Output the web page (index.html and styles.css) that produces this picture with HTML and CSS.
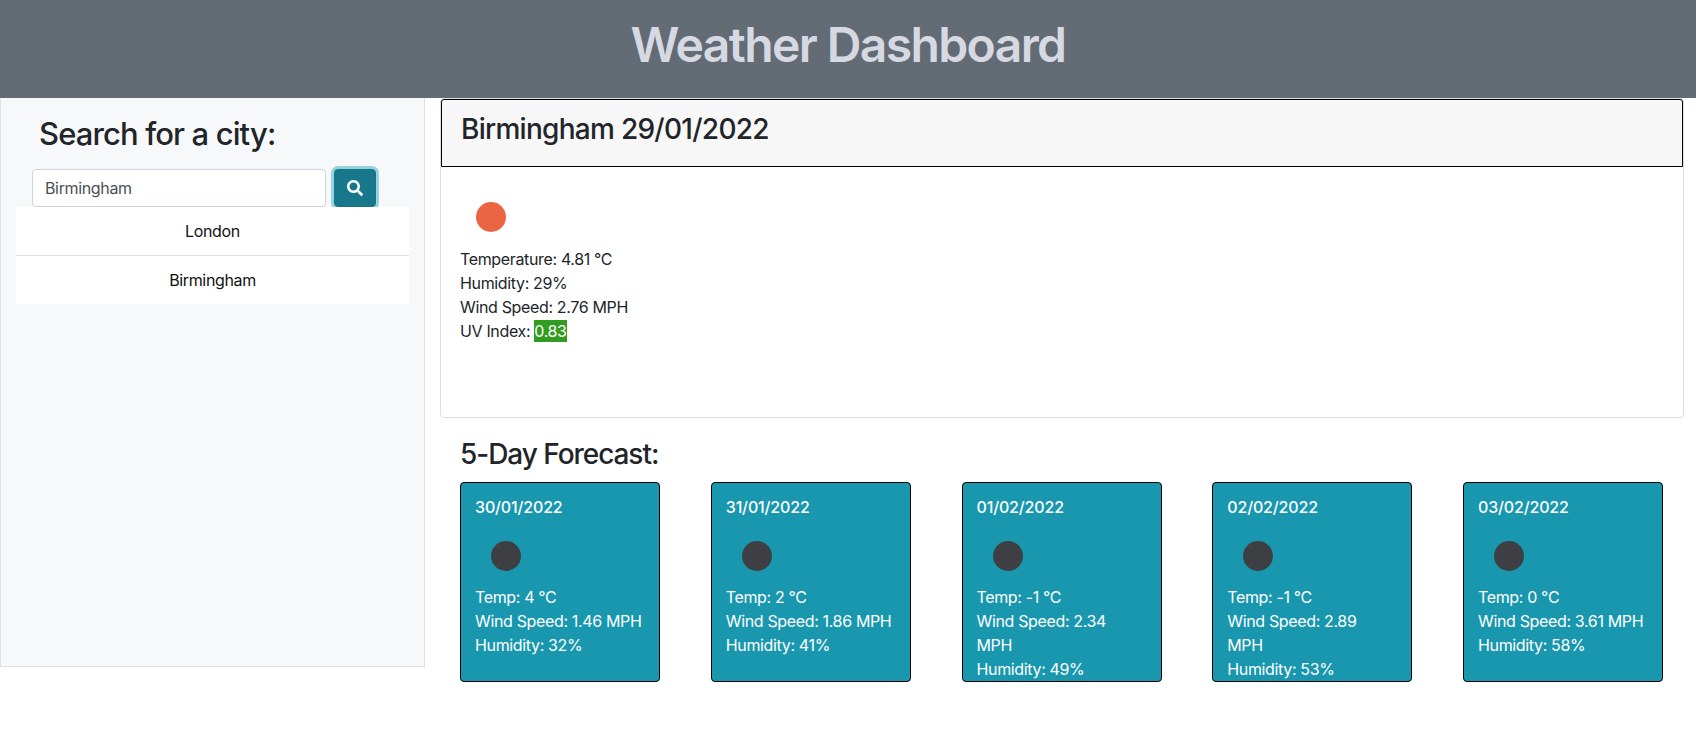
FILE: index.html
```html
<!DOCTYPE html>
<html lang="en">
<head>
<meta charset="utf-8">
<title>Weather Dashboard</title>
<link rel="stylesheet" href="styles.css">
</head>
<body>
<header class="topbar"><h1>Weather Dashboard</h1></header>
<div class="layout">
  <aside class="sidebar">
    <h3 class="search-title">Search for a city:</h3>
    <form class="search-form">
      <input class="search-input" type="text" value="Birmingham">
      <button class="search-btn" type="button" aria-label="Search">
        <svg viewBox="0 0 512 512" width="16" height="16"><path fill="#fff" d="M505 442.700L405.300 343c-4.500-4.500-10.600-7-17-7H372c27.600-35.300 44-79.700 44-128C416 93.100 322.900 0 208 0S0 93.100 0 208s93.100 208 208 208c48.300 0 92.700-16.400 128-44v16.300c0 6.400 2.500 12.500 7 17l99.700 99.700c9.400 9.400 24.600 9.400 33.900 0l28.300-28.300c9.400-9.400 9.400-24.600.1-34zM208 336c-70.700 0-128-57.200-128-128 0-70.700 57.200-128 128-128 70.700 0 128 57.200 128 128 0 70.700-57.200 128-128 128z"/></svg>
      </button>
    </form>
    <ul class="history">
      <li>London</li>
      <li>Birmingham</li>
    </ul>
  </aside>
  <main class="content">
    <section class="today">
      <h2 class="today-title">Birmingham 29/01/2022</h2>
      <div class="today-body">
        <div class="icon"><span class="dot dot-sun"></span></div>
        <p>Temperature: 4.81 °C</p>
        <p>Humidity: 29%</p>
        <p>Wind Speed: 2.76 MPH</p>
        <p>UV Index: <span class="uv">0.83</span></p>
      </div>
    </section>
    <section class="forecast">
      <h3 class="forecast-title">5-Day Forecast:</h3>
      <div class="forecast-row">
        <article class="day">
          <h6>30/01/2022</h6>
          <div class="icon"><span class="dot dot-night"></span></div>
          <p>Temp: 4 °C</p><p>Wind Speed: 1.46 MPH</p><p>Humidity: 32%</p>
        </article>
        <article class="day">
          <h6>31/01/2022</h6>
          <div class="icon"><span class="dot dot-night"></span></div>
          <p>Temp: 2 °C</p><p>Wind Speed: 1.86 MPH</p><p>Humidity: 41%</p>
        </article>
        <article class="day">
          <h6>01/02/2022</h6>
          <div class="icon"><span class="dot dot-night"></span></div>
          <p>Temp: -1 °C</p><p>Wind Speed: 2.34 MPH</p><p>Humidity: 49%</p>
        </article>
        <article class="day">
          <h6>02/02/2022</h6>
          <div class="icon"><span class="dot dot-night"></span></div>
          <p>Temp: -1 °C</p><p>Wind Speed: 2.89 MPH</p><p>Humidity: 53%</p>
        </article>
        <article class="day">
          <h6>03/02/2022</h6>
          <div class="icon"><span class="dot dot-night"></span></div>
          <p>Temp: 0 °C</p><p>Wind Speed: 3.61 MPH</p><p>Humidity: 58%</p>
        </article>
      </div>
    </section>
  </main>
</div>
</body>
</html>
```

FILE: styles.css
```css
* { box-sizing: border-box; }
html, body { margin: 0; padding: 0; }
body {
  font-family: Inter, "Liberation Sans", sans-serif;
  font-size: 16px;
  line-height: 24px;
  letter-spacing: -0.35px;
  color: #212529;
  background: #fff;
}
p { margin: 0; }

.topbar {
  height: 98px;
  background: #636b75;
  text-align: center;
}
.topbar h1 {
  margin: 0;
  padding-top: 16px;
  font-size: 48px;
  line-height: 58px;
  font-weight: 600;
  letter-spacing: -1.6px;
  color: #d6d9e2;
}

.layout { display: flex; align-items: flex-start; }

.sidebar {
  width: 425px;
  height: 569px;
  flex: none;
  background: #f7f8fa;
  border: 1px solid #dee2e6;
  border-top: 0;
  padding: 0 15px;
}
.search-title {
  margin: 0;
  padding: 17px 0 0 23px;
  font-size: 31px;
  line-height: 38px;
  font-weight: 500;
  letter-spacing: -0.88px;
}
.search-form {
  display: flex;
  gap: 8px;
  margin: 16px 0 0 16px;
  height: 38px;
}
.search-input {
  width: 294px;
  height: 38px;
  padding: 6px 12px;
  font: inherit;
  letter-spacing: inherit;
  color: #495057;
  background: #fff;
  border: 1px solid #ced4da;
  border-radius: 4px;
}
.search-btn {
  width: 42px;
  height: 38px;
  padding: 0;
  display: flex;
  align-items: center;
  justify-content: center;
  background: #17788c;
  border: 1px solid #157488;
  border-radius: 4px;
  box-shadow: 0 0 0 3px #95d3de;
}
.history {
  position: relative;
  list-style: none;
  margin: 0;
  padding: 0;
  width: 393px;
  background: #fff;
  text-align: center;
  color: #111;
}
.history li {
  height: 48px;
  padding-top: 12px;
}
.history li + li { height: 49px; border-top: 1px solid #dee2e6; }

.content {
  flex: 1;
  min-width: 0;
  padding: 0 12px 0 15px;
}
.today {
  height: 320px;
  border: 1px solid #dcdfe2;
  border-radius: 4px;
}
.today-title {
  margin: 0;
  height: 68px;
  padding: 14px 19px 0;
  font-size: 28px;
  line-height: 30px;
  font-weight: 500;
  letter-spacing: -0.72px;
  background: #f7f7f7;
  border: 1px solid #000;
  border-radius: 3px 3px 0 0;
}
.today-body { padding: 19px 19px 0; }

.icon {
  width: 62px;
  height: 61px;
  display: flex;
  align-items: center;
  justify-content: center;
}
.dot { width: 30px; height: 30px; border-radius: 50%; }
.dot-sun { background: #ec6543; }
.dot-night { background: #3e3f42; }

.uv {
  background: #329c20;
  color: #fff;
  padding: 1px 0;
}

.forecast { padding: 20px 21px 0 20px; }
.forecast-title {
  margin: 0;
  font-size: 28px;
  line-height: 32px;
  font-weight: 500;
  letter-spacing: -1.05px;
}
.forecast-row {
  display: flex;
  justify-content: space-between;
  margin-top: 12px;
}
.day {
  width: 200px;
  height: 200px;
  padding: 12px 16px 12px 14px;
  overflow: hidden;
  background: #1897af;
  color: #fff;
  border: 1px solid #000;
  border-radius: 4px;
}
.day h6 {
  margin: 0 0 7px;
  font-size: 16px;
  line-height: 24px;
  font-weight: 500;
  letter-spacing: -0.15px;
}
.day .icon { height: 59px; }
```
